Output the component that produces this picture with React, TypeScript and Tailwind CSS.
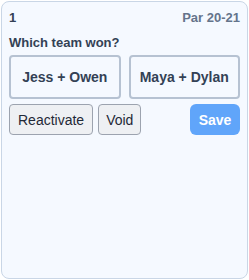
export default function App() {
  return (
    <div className="w-[249px] h-[280px] p-px font-['Liberation_Sans',Arial,sans-serif]">
      <div className="h-full rounded-lg border border-[#c9d6e6] bg-[#f5f9ff] px-[7px] pt-2">
        <div className="flex items-center justify-between text-[13px] font-bold leading-4">
          <span className="text-[#334155]">1</span>
          <span className="text-[#64748b]">Par 20-21</span>
        </div>
        <div className="mt-[9px] text-[13px] font-bold leading-4 text-[#334155]">Which team won?</div>
        <div className="mt-1 grid grid-cols-2 gap-2">
          <TeamButton label="Jess + Owen" />
          <TeamButton label="Maya + Dylan" />
        </div>
        <div className="mt-[5px] flex items-center gap-[5px]">
          <button className="h-[31px] rounded border border-[#9ca3af] bg-[#eef0f3] px-[8px] text-sm text-[#1f2937]">Reactivate</button>
          <button className="h-[31px] rounded border border-[#9ca3af] bg-[#eef0f3] px-[7px] text-sm text-[#1f2937]">Void</button>
          <button className="ml-auto h-[31px] w-[50px] rounded-md bg-[#60a5fa] text-sm font-bold text-white">Save</button>
        </div>
      </div>
    </div>
  )
}

function TeamButton({ label }: { label: string }) {
  return (
    <button className="h-[44px] rounded border-2 border-[#b6c2d2] bg-[#f5f9ff] text-sm font-bold text-[#334155]">
      {label}
    </button>
  )
}
